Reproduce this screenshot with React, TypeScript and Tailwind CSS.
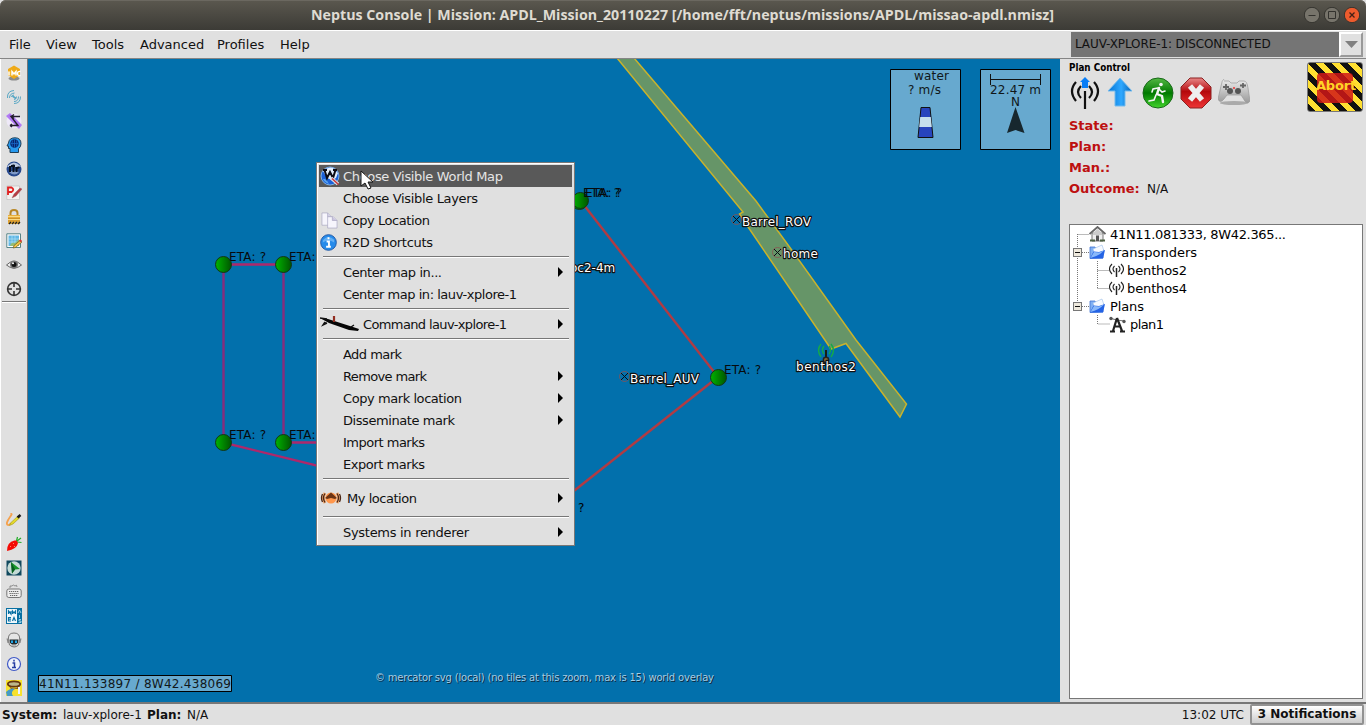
import React from "react";

type IconProps = { name: string };

function ToolIcon({ name }: IconProps) {
  const art: Record<string, React.ReactNode> = {
    imc: (
      <>
        <ellipse cx="8" cy="13.5" rx="5.5" ry="2" fill="#666" opacity=".7" />
        <path d="M8 0.5 14 4v6l-6 4-6-4V4z" fill="#efaa18" />
        <path d="M2 6h12v4.500H2z" fill="#f3b52c" />
        <path d="M3 6.500v4M6 10.500v-4l2 2.500 2-2.500v4M14.500 6.500q-3-.5-3 2t3 2" fill="none" stroke="#fff" strokeWidth="1.400" />
      </>
    ),
    signal: (
      <g fill="none" stroke="#58a7c4" strokeWidth="1">
        <path d="M1.500 9Q1 2 8 1.500M3.500 9q0-4.500 5-5M5.500 8q0-2 2.500-2M8 14.500q6.500 0 6.500-7M8 12.500q4.500 0 4.500-5M8 10.500q2.500 0 2.500-3" />
        <path d="m6.500 7 3.500 2.500" strokeWidth="1.600" />
      </g>
    ),
    swap: (
      <>
        <circle cx="8" cy="8" r="7.500" fill="#eee9f8" />
        <path d="M0 3 4 0l12 12-3 4z" fill="#b27af5" />
        <path d="M14 3.500H5l7 9H4M5 3.500l3-2M5 3.500l3 2M12 12.500l-2-2.500M4 12.500l2-1.500M4 12.500l2 1.500" fill="none" stroke="#24202e" strokeWidth="1.400" />
      </>
    ),
    head: (
      <>
        <path d="M4 15.500v-4H2.500V9H1l1.500-3Q3 .8 9 .8q6 0 6 6 0 3-2.500 5v3.700z" fill="#2699ef" stroke="#213e55" />
        <circle cx="8.500" cy="6.500" r="4.300" fill="#07246c" />
        <path d="M4.500 6.500h8M8.500 2.500v8M6.500 3.500q-1 3 0 6M10.500 3.500q1 3 0 6" fill="none" stroke="#1866c6" strokeWidth=".8" />
      </>
    ),
    ir: (
      <>
        <circle cx="8" cy="8" r="7.500" fill="#27488c" />
        <path d="M1.500 5Q8-2 14.500 5v1h-13z" fill="#bbc9e1" />
        <path d="M3 11Q8 8 13 11q-4 5-10 0" fill="#7f99c6" />
        <path d="M4 5v6M7.500 3.500V11M5 5h4M10.500 11V6M10.500 8q.5-2 3-1.500" fill="none" stroke="#07101f" strokeWidth="2" />
      </>
    ),
    pdf: (
      <>
        <path d="M.8 1h12.700v13.500H.8z" fill="#f5f1ef" stroke="#bbb" strokeWidth=".6" />
        <path d="M2 10V2.500h3.500q3.500 2 0 4.500H2" fill="none" stroke="#e02020" strokeWidth="1.800" />
        <path d="m6 13 2-4 6-6 2 1-6 7z" fill="#b83b42" stroke="#8f5d60" strokeWidth=".4" />
      </>
    ),
    lock: (
      <>
        <path d="M4.500 6.500V4q0-3 3.500-3t3.500 3v2.500" fill="none" stroke="#b78625" strokeWidth="2" />
        <path d="M2 6h12v9H2z" fill="#e8ad3b" />
        <path d="M2 7.500h12M2 10.500h12" stroke="#f9d983" />
        <path d="M2 9.500h12M2 12h12" stroke="#bd7d19" strokeWidth=".6" />
        <path d="m3 15 2-2M6 15l2-2M9 15l2-2M12 15l2-2" stroke="#222" strokeWidth="1.400" />
      </>
    ),
    map: (
      <>
        <path d="M.8 .8h13.700v13.700H.8z" fill="#fff" stroke="#578487" />
        <path d="M2.500 2.500h10.500v10.500H2.500z" fill="#62b7e5" />
        <path d="M2 6h11M2 9h11M6 2v11M9 2v11" stroke="#b9e7f5" strokeWidth=".6" />
        <path d="M4 13q1-4 5-3l4-4v7z" fill="#95bd76" />
        <path d="m7 15 1-2.500 6-5 2 1.500-6.500 5.500z" fill="#f3c745" stroke="#604a1b" strokeWidth=".6" />
        <path d="m13.500 7 2 1.500" stroke="#d33" strokeWidth="2" />
      </>
    ),
    eye: (
      <>
        <path d="M.5 8Q8 .5 15.500 8 8 14.500 .5 8" fill="#eee" stroke="#666" />
        <circle cx="8" cy="7.500" r="4" fill="#777" />
        <circle cx="8" cy="7.500" r="2.500" fill="#111" />
        <circle cx="7" cy="6.200" r="1" fill="#fff" />
      </>
    ),
    target: (
      <g fill="none" stroke="#333" strokeWidth="1.600">
        <circle cx="8" cy="8" r="6.400" />
        <path d="M8 1v5M8 10v5M1 8h5M10 8h5" />
      </g>
    ),
    pencil: (
      <>
        <path d="M4.500 2Q7 1 4 5q-5 7-2 8 1 .5 3-2" fill="none" stroke="#f5a14d" strokeWidth="1.800" />
        <path d="m3.500 13.500 1.500-3 7-6.500 2 1.500-7 6.500z" fill="#e4da2c" stroke="#a29716" strokeWidth=".6" />
        <path d="m11.500 5.500 3-2.500" stroke="#171717" strokeWidth="2.500" />
      </>
    ),
    carrot: (
      <>
        <path d="m10.500 5 1-4M11 5l4-3M11 6l4.500.5" stroke="#22ad28" strokeWidth="1.200" />
        <path d="M1 15q0-9 7.500-10.500h2L12 7q-1 6-11 8" fill="#f40b05" />
        <path d="m7 7 1 1M4 10l1 1M8 10l1 1" stroke="#ff8b64" />
      </>
    ),
    north: (
      <>
        <path d="M.500 .500h15v15h-15z" fill="#11495e" />
        <circle cx="8" cy="8" r="6.700" fill="#c4dad5" />
        <path d="m5 2 9 7-5 .500-3 4z" fill="#159427" />
        <path d="m5 2 4 7.500-3 4z" fill="#075c20" />
      </>
    ),
    keys: (
      <>
        <path d="M4 4q-1-3 2-2 1-2 3 0 2-2 2 1" fill="none" stroke="#777" strokeWidth=".8" />
        <rect x=".8" y="5" width="14.400" height="8.500" rx="2" fill="#eee" stroke="#777" />
        <path d="M3 7.500h10M3.500 9.500h9M4 11.500h8" stroke="#666" strokeDasharray="1.300 .700" strokeWidth="1" />
      </>
    ),
    nmea: (
      <>
        <path d="M0 0h16v16H0z" fill="#0870a3" />
        <path d="M1 1h10v14H1z" fill="#f0f8fc" />
        <path d="M2.500 6V3l2.500 3V3M6.500 6V3L8 5l1.500-2v3M5 9.500H2.500v3.500H5M2.500 11.200H5M6.500 13l1.500-3.500L9.500 13" fill="none" stroke="#0870a3" strokeWidth="1.200" />
        <path d="m12 5 1.500-3L15 5M13.500 7v3M15 11.500h-2v1.500h2v1.500h-2.500" fill="none" stroke="#bde4f3" strokeWidth=".8" />
      </>
    ),
    robot: (
      <>
        <path d="M2.500 8Q1.500 1 8 1t5.500 7l-1 5q-4 4-9 0z" fill="#e5e5e5" stroke="#777" />
        <path d="M.5 6.500H3V11H1.500zM13 6.500h2.500L14.500 11H13z" fill="#888" />
        <path d="M3.500 7.500h9L12 11l-2 1.500H6L4 11z" fill="#20282b" />
        <path d="M5 8.500h2v2.500H5zM9 8.500h2v2.500H9z" fill="#21a5e6" />
        <path d="M5.500 14h5" stroke="#888" />
      </>
    ),
    info: (
      <>
        <circle cx="8" cy="8" r="6.500" fill="#f0f3fa" stroke="#4059c6" strokeWidth="1.200" />
        <path d="M6.500 7h2v4.500M6 11.500h4M8 3.800v1.700" stroke="#263ea3" strokeWidth="1.500" fill="none" />
      </>
    ),
    ring: (
      <>
        <path d="M0 0h16v16H0z" fill="#f7e12e" />
        <path d="M2 5q6 7 12 0l-2 4H5z" fill="#8c5420" />
        <ellipse cx="8" cy="4" rx="6.200" ry="2.700" fill="#bdb68b" stroke="#65350e" strokeWidth="1.800" />
        <path d="M13 7v7" stroke="#eef4ff" strokeWidth="2" />
        <path d="M0 12q5-5 9-3-5 3-2 7H1" fill="#469ac4" />
      </>
    ),
  };
  return <svg className="block size-4" viewBox="0 0 16 16">{art[name]}</svg>;
}

const upperTools = ["imc", "signal", "swap", "head", "ir", "pdf", "lock", "map", "eye", "target"];
const lowerTools = ["pencil", "carrot", "north", "keys", "nmea", "robot", "info", "ring"];

function TitleBar() {
  return (
    <header className="relative flex h-[30px] shrink-0 items-center rounded-t-md bg-linear-to-b from-[#5b584f] to-[#3c3b36] pl-[311px] font-['Open_Sans','Noto_Sans',sans-serif] text-[14px] font-bold shadow-[inset_0_1px_#6b6860]">
      <svg className="block h-[30px] w-[745px]"><text x="0" y="20" fill="#dfdbd2" textLength="743" lengthAdjust="spacingAndGlyphs">Neptus Console | Mission: APDL_Mission_20110227 [/home/fft/neptus/missions/APDL/missao-apdl.nmisz]</text></svg>
      <div className="absolute top-[7px] right-[6px] flex gap-1">
        <svg className="size-4" viewBox="0 0 16 16"><circle cx="8" cy="8" r="7.700" fill="#77746b" stroke="#35342f" /><path d="M4.500 8.500h7" stroke="#33322e" /></svg>
        <svg className="size-4" viewBox="0 0 16 16"><circle cx="8" cy="8" r="7.700" fill="#77746b" stroke="#35342f" /><path d="M4.500 4.500h7v7h-7z" fill="none" stroke="#33322e" /></svg>
        <svg className="size-4" viewBox="0 0 16 16"><circle cx="8" cy="8" r="7.700" fill="#ed5b2d" stroke="#35342f" /><path d="m5.500 5.500 5 5m0-5-5 5" stroke="#442016" strokeWidth="1.300" /></svg>
      </div>
    </header>
  );
}

function MenuBar() {
  return (
    <nav className="flex h-[29px] shrink-0 border-t border-b border-t-white border-b-[#858585] text-[13px]">
      <div className="flex flex-1 items-center pl-[9px]">
        <span className="w-[37px]">File</span><span className="w-[46px]">View</span>
        <span className="w-[48px]">Tools</span><span className="w-[77px]">Advanced</span>
        <span className="w-[63px]">Profiles</span><span>Help</span>
      </div>
      <div className="mt-px mr-[3px] flex h-[25px] w-[292px] bg-[#757575]">
        <span className="flex-1 pl-[4px] text-[12px] leading-[25px] tracking-[-0.1px]">LAUV-XPLORE-1: DISCONNECTED</span>
        <div className="flex w-6 items-center justify-center border-2 border-t-white border-r-[#999] border-b-[#999] border-l-white bg-[#e0e0e0]">
          <svg width="13" height="7"><path d="M0 0h13L6.500 7z" fill="#808080" /></svg>
        </div>
      </div>
    </nav>
  );
}

function SideTools() {
  return (
    <aside className="flex w-7 shrink-0 flex-col border-r border-l border-r-[#777] border-l-white">
      <div className="flex flex-col items-center gap-2 pt-[6px]">{upperTools.map((n) => <ToolIcon key={n} name={n} />)}</div>
      <div className="mx-px mt-[4px] h-[2px] border-t border-t-[#777] bg-white" />
      <div className="mt-auto flex flex-col items-center gap-2 pb-[6px]">{lowerTools.map((n) => <ToolIcon key={n} name={n} />)}</div>
    </aside>
  );
}

const nodes = [[223, 264], [283, 264], [223, 442], [283, 442], [579, 201], [580, 200], [718, 377]];
const etas = [[229, 261], [289, 261], [229, 439], [289, 439], [583, 197], [585, 197], [724, 374]];
const marks: [string, number, number, number, number, number][] = [
  ["Barrel_ROV", 736.5, 219.5, 742, 226, 69], ["home", 777.5, 252.5, 783, 258, 35], ["Barrel_AUV", 624.5, 376.5, 630, 383, 69],
];

function Outlined({ x, y, width, children }: { x: number; y: number; width?: number; children: string }) {
  return <text x={x} y={y} textLength={width} fill="#fff" stroke="#111" strokeWidth="2.400" strokeLinejoin="round" paintOrder="stroke" fontSize="12">{children}</text>;
}

function MissionMap() {
  return (
    <svg className="absolute inset-0 block h-full w-full" viewBox="28 59 1032 643">
      <defs><linearGradient id="node"><stop stopColor="#00b400" /><stop offset="1" stopColor="#005500" /></linearGradient></defs>
      <path d="M617 58h17L756 201 791 249 856 340 906.500 404 900 417 846 343.500 831 349 744 221 739.500 214 743 212z" fill="#669568" stroke="#c8b32d" strokeWidth="1.500" />
      <g fill="none" strokeWidth="2.400">
        <path d="M223.500 264v178M283.500 264v178" stroke="#872d7d" />
        <path d="M223 264.500h60M283 442.500h70M223 442.500l130 32" stroke="#ae286b" />
        <path d="M580 200 718 377 570 494" stroke="#b13b43" />
      </g>
      {nodes.map(([x, y], i) => <circle key={i} cx={x + 0.5} cy={y + 0.5} r="8" fill="url(#node)" stroke="#12351a" />)}
      {etas.map(([x, y], i) => <text key={i} x={x} y={y} fontSize="12" textLength="37" fill="#070a0c">ETA: ?</text>)}
      <text x="578" y="512" fontSize="12">?</text>
      {marks.map(([name, cx, cy, x, y, w]) => (
        <g key={name}>
          <circle cx={cx} cy={cy} r="5" fill="none" stroke="#8b5050" strokeWidth=".8" />
          <path d={`M${cx - 3.5} ${cy - 3.5}l7 7m0-7-7 7`} stroke="#080f16" />
          <Outlined x={x} y={y} width={w}>{name}</Outlined>
        </g>
      ))}
      <Outlined x={570} y={272}>oc2-4m</Outlined>
      <g fill="none" strokeWidth="1.400" stroke="#15aa49">
        <path d="M821 344q-5 6 0 13M831 344q5 6 0 13M824 346q-3 4 0 8M829 346q3 4 0 8" />
        <path d="M826 350v8" stroke="#171d17" strokeWidth="2" /><circle cx="826" cy="360" r="2.700" fill="#806b37" stroke="#222" />
      </g>
      <Outlined x={796} y={371} width={60}>benthos2</Outlined>

      <g fill="#67a9cf" stroke="#000"><path d="M890.500 69.500h70v80h-70zM980.500 69.500h70v80h-70zM38.500 675.500h193v16h-193z" /></g>
      <g fontSize="12" fill="#101719">
        <text x="914" y="80" textLength="35">water</text><text x="908" y="94" textLength="33">? m/s</text>
        <text x="990" y="94" textLength="51">22.47 m</text><text x="1011" y="106">N</text>
        <text x="39" y="688" textLength="192">41N11.133897 / 8W42.438069</text>
      </g>
      <path d="M921 107.500h9l3 30h-15z" fill="#2744bd" stroke="#111" /><path d="M920.200 117h10.600l1 10h-12.600z" fill="#c6dfed" />
      <path d="M990.500 79.500h50M990.500 74v11M1040.500 74v11" stroke="#111" fill="none" />
      <path d="m1015.500 107 9 26-9-3-8.500 3z" fill="#17272e" />
      <text fontSize="10" fill="#a5cce4" x="375" y="681" textLength="339" className="[text-shadow:1px_1px_0_#10293d]">© mercator svg (local) (no tiles at this zoom, max is 15) world overlay</text>
    </svg>
  );
}

function MenuArt({ kind }: { kind: string }) {
  if (kind === "world") return (
    <svg className="ml-px h-5 w-[20px]" viewBox="0 0 20 20"><circle cx="10" cy="10" r="9" fill="#1c62d8" stroke="#8fc3f6" strokeWidth=".8" /><path d="M3 5q5-5 10-3l5 5-2 5-4 2-5-2z" fill="#e2eefb" /><path d="M5 13q3 2 4 5-5-2-6-5M12 4l3 2" fill="#58a4f1" /><path d="m4.500 4 2.500 8 3-6 3 6 2.500-8M3 4h4M13 4h4" fill="none" stroke="#0b0b14" strokeWidth="2" /><path d="m11 12 7 6" stroke="#dce3ed" strokeWidth="3.500" /><path d="m12 12.500 6.500 6" stroke="#c93a3a" strokeWidth="1.600" /></svg>
  );
  if (kind === "copy") return (
    <svg className="ml-[2px] size-[17px]" viewBox="0 0 18 18"><g stroke="#a7a4bf" strokeWidth=".7" fill="#f6f5fc"><path d="M1 1h6l4 4v9H1z" /><path d="M7 1v4h4" fill="#d6d2e7" /><path d="M8 5h5l4 4v8H7V5z" /><path d="M12 5v4h5" fill="#cbc6df" /></g></svg>
  );
  if (kind === "info") return (
    <svg className="ml-px size-[17px]" viewBox="0 0 18 18"><circle cx="9" cy="9" r="8.300" fill="#268bea" stroke="#225aa7" /><path d="M3 7Q8 0 15 6v3Q9 5 3 9z" fill="#73b9f6" opacity=".8" /><path d="M9 3.500v2M7 8h2.500v5M6.500 13.500h5" stroke="#fff" strokeWidth="2" fill="none" /></svg>
  );
  if (kind === "vehicle") return (
    <svg className="h-[18px] w-[41px] translate-x-px" viewBox="0 0 41 18"><path d="m0 3 8 1 25 8 6 2-1 2-9-1L9 8z" fill="#050505" /><path d="m0 3 7 1M7 8l-4 2 2-3M31 12l3-2" stroke="#111" strokeWidth="1.400" /><path d="M14 1v6" stroke="#922e21" strokeWidth="2.200" /></svg>
  );
  return (
    <svg className="ml-px h-[18px] w-[22px]" viewBox="0 0 22 18"><circle cx="11" cy="9" r="5.500" fill="#ff974c" /><path d="m5 9 6-5.500L17 9l-2 1-4-1-4 1z" fill="#6b3415" /><g fill="none" stroke="#f0a66b" strokeWidth="3"><path d="M5 4q-3 5 0 10M17 4q3 5 0 10" /></g><path d="M5 4.500q-3 4.500 0 9M2.500 5q-2 4 0 8M17 4.500q3 4.500 0 9M19.500 5q2 4 0 8" fill="none" stroke="#4b2615" strokeWidth="1.300" /></svg>
  );
}

function MenuRow({ label, icon, arrow, active, tall, wide, width }: { label: string; icon?: string; arrow?: boolean; active?: boolean; tall?: boolean; wide?: string; width: number }) {
  return (
    <div className={`${tall ? "h-[30px]" : "h-[22px]"} ${active ? "bg-[#595959] text-[#e5e5e5]" : "text-[#111]"} flex items-center pr-[9px]`}>
      <div className={`${wide ?? "w-6"} shrink-0`}>{icon && <MenuArt kind={icon} />}</div>
      <svg className="block h-[22px] w-0 min-w-0 flex-1"><text x="0" y="16" fontSize="13" textLength={width} fill="currentColor">{label}</text></svg>
      {arrow && <svg width="6" height="10"><path d="M1 0v10l5-5z" /></svg>}
    </div>
  );
}

function Divider() {
  return <div className="mr-[3px] ml-1 flex h-2 items-center"><div className="h-[2px] w-full border-t border-t-[#777] bg-white" /></div>;
}

function ContextMenu() {
  return (
    <div className="absolute top-[103px] left-[288px] h-[384px] w-[259px] border border-[#777] bg-[#e0e0e0] p-[2px] shadow-[inset_1px_1px_white]">
      <MenuRow label="Choose Visible World Map" icon="world" active width={160} />
      <MenuRow label="Choose Visible Layers" width={135} />
      <MenuRow label="Copy Location" icon="copy" width={87} />
      <MenuRow label="R2D Shortcuts" icon="info" width={90} />
      <Divider />
      <MenuRow label="Center map in..." arrow width={99} />
      <MenuRow label="Center map in: lauv-xplore-1" width={174} />
      <Divider />
      <MenuRow label="Command lauv-xplore-1" icon="vehicle" wide="w-11" arrow width={144} />
      <Divider />
      <MenuRow label="Add mark" width={59} />
      <MenuRow label="Remove mark" arrow width={84} />
      <MenuRow label="Copy mark location" arrow width={119} />
      <MenuRow label="Disseminate mark" arrow width={112} />
      <MenuRow label="Import marks" width={82} />
      <MenuRow label="Export marks" width={82} />
      <Divider />
      <MenuRow label="My location" icon="home" wide="w-7" tall arrow width={70} />
      <Divider />
      <MenuRow label="Systems in renderer" arrow width={126} />
      <svg className="absolute top-[7px] left-[43px] h-5 w-[13px]" viewBox="0 0 13 20"><path d="M1 1v15l4-3 3 6 3-1-3-6h5z" fill="#fff" stroke="#151515" /></svg>
    </div>
  );
}

function PlanControl() {
  return (
    <section className="h-[165px] shrink-0">
      <div className="flex h-[55px] justify-between">
        <div>
          <h2 className="h-[18px] pt-[2px] text-[10px] leading-[14px] font-bold tracking-[-0.700px]"><svg className="block h-[14px] w-[64px]"><text x="0" y="10" fontSize="10" textLength="61" lengthAdjust="spacingAndGlyphs" letterSpacing="0">Plan Control</text></svg></h2>
          <div className="flex gap-[6px]">
            <svg className="-mr-[3px] size-8" viewBox="0 0 32 32"><g fill="none" stroke="#111" strokeWidth="2.200"><path d="M7 5q-8 9 0 19M12 9q-6 6 0 12M25 5q8 9 0 19M20 9q6 6 0 12M16 14v18" /></g><path d="m16 0 5 5h-2v6h-6V5h-2z" fill="#087df6" /></svg>
            <svg className="size-8" viewBox="0 0 32 32"><defs><linearGradient id="up"><stop stopColor="#0574d4" /><stop offset=".55" stopColor="#2fa8ff" /><stop offset="1" stopColor="#0764b8" /></linearGradient></defs><path d="m16 1 12 13h-7v15H11V14H4z" fill="url(#up)" stroke="#75bbed" /></svg>
            <svg className="size-8" viewBox="0 0 32 32"><defs><linearGradient id="go" x2="0" y2="1"><stop stopColor="#55b945" /><stop offset=".5" stopColor="#007900" /><stop offset="1" stopColor="#43d52d" /></linearGradient></defs><circle cx="16" cy="16" r="15" fill="url(#go)" stroke="#176818" /><g fill="none" stroke="#f4f4f4" strokeLinecap="round"><circle cx="19" cy="7.500" r="1.800" fill="#f4f4f4" stroke="none" /><path d="m17 11-2 6 5 2 1 6" strokeWidth="2.400" /><path d="m16 11-5 1-1 3M17 12l3 3 3-1M14 18l-2 5-5 1" strokeWidth="1.600" /></g></svg>
            <svg className="size-8" viewBox="0 0 32 32"><defs><linearGradient id="stop" x2="0" y2="1"><stop stopColor="#e88787" /><stop offset=".45" stopColor="#b5080c" /><stop offset="1" stopColor="#ee3535" /></linearGradient></defs><path d="M10 1h12l9 9v12l-9 9H10l-9-9V10z" fill="url(#stop)" stroke="#8b2020" /><path d="m10 9 12 14M22 9 10 23" stroke="#eee" strokeWidth="5.500" /></svg>
            <svg className="size-8" viewBox="0 0 32 32"><defs><linearGradient id="pad" x2="0" y2="1"><stop stopColor="#eee" /><stop offset="1" stopColor="#999" /></linearGradient></defs><ellipse cx="16" cy="26" rx="14" ry="2" fill="#aaa" /><path d="M6 4h5l2 2h6l2-2h5q3 0 4 7l2 13q-3 5-7-3l-2-3H9l-3 4q-4 5-6 0l3-13q1-6 3-7" fill="url(#pad)" stroke="#999" strokeWidth=".7" /><path d="M5 10h6M8 7v6M22 8.500h6M25 6v5" stroke="#666" strokeWidth="1.800" /><circle cx="12" cy="14" r="3" fill="#555" /><circle cx="20" cy="14" r="3" fill="#555" /><circle cx="16" cy="11" r="1" fill="#e33" /></svg>
          </div>
        </div>
        <button className="relative mt-[3px] h-[50px] w-[56px] overflow-hidden rounded-[3px] border border-[#777] bg-[repeating-linear-gradient(45deg,#111_0_5.6px,#ffdf31_5.6px_11.2px)]">
          <span className="absolute top-[10px] left-[9px] h-[30px] w-9 rounded-sm bg-[#d01818]/85" />
          <span className="absolute top-[12px] left-[8px] text-[13px] leading-[22px] font-bold tracking-[-0.2px] text-[#ffd426]">Abort</span>
        </button>
      </div>
      <div className="mt-[1px] flex flex-col text-[13px] font-bold text-[#bd1010]">
        <span className="h-[21px] leading-[21px]">State:</span><span className="h-[21px] leading-[21px]">Plan:</span><span className="h-[21px] leading-[21px]">Man.:</span>
        <span className="flex h-[21px] leading-[21px]"><span className="w-[78px]">Outcome:</span><span className="pt-px text-[12px] font-normal text-[#111]">N/A</span></span>
      </div>
    </section>
  );
}

function TreeIcon({ kind }: { kind: string }) {
  if (kind === "home") return <svg className="h-4 w-[17px]" viewBox="0 0 17 16"><path d="M3 7h11v8H3z" fill="#eee" stroke="#777" /><path d="m4 7 4.500-4L13 7v2H4z" fill="#ccc" /><path d="m.5 8 8-7 8 7" fill="none" stroke="#666" strokeWidth="1.800" /><path d="M7 9.500h3V15H7z" fill="#555" /><path d="M1 14.500h5M11 14.500h5" stroke="#4d6043" strokeWidth="2" /></svg>;
  if (kind === "folder") return <svg className="h-4 w-[17px]" viewBox="0 0 17 16"><path d="M1 14.500V3h5l1 2h7v9z" fill="#7fb0f4" stroke="#4275d0" strokeWidth=".8" /><path d="m4 5 9-4 2 6-9 4z" fill="#f6faff" stroke="#9abce8" strokeWidth=".6" /><path d="M1 14.500 4.500 7.500 10 8l6-2-2 8.500z" fill="#2463e5" /><path d="M1.500 14 5 8l5 .500 5-2Q10 12 1.500 14" fill="#89b9fa" /></svg>;
  if (kind === "antenna") return <svg className="h-4 w-[15px]" viewBox="0 0 15 16"><g fill="none" stroke="#222" strokeWidth="1.100"><path d="M3 2q-5 5 0 10M5.500 4q-3 3 0 6M12 2q5 5 0 10M9.500 4q3 3 0 6" /><path d="M7.500 6v9" strokeWidth="1.500" /></g></svg>;
  return <svg className="size-[17px]" viewBox="0 0 17 17"><path d="m2 2.500 6 1.500 7 1" stroke="#777" strokeWidth="1.200" /><path d="M8 2 4 15M8 2l5 13M6 10.500h6M1 15.500h5M11 15.500h5" stroke="#222" strokeWidth="2.200" fill="none" /><circle cx="2" cy="2.500" r="1.700" fill="#555" /><circle cx="15" cy="5.500" r="1.700" fill="#555" /></svg>;
}

function TreeRow({ label, icon, pad, gap, width }: { label: string; icon: string; pad: string; gap: string; width: number }) {
  return <div className={`flex h-[18px] items-center ${pad} ${gap}`}><TreeIcon kind={icon} /><svg className="h-[18px] w-0 min-w-0 flex-1"><text x="0" y="13.500" fontSize="13" textLength={width}>{label}</text></svg></div>;
}

function PlanTree() {
  return (
    <section className="relative mb-[3px] flex-1 border border-[#777] bg-white">
      <svg className="absolute top-0 left-0 h-[108px] w-[42px]" viewBox="0 0 42 108"><path d="M7.500 9v72M7.500 9.500h12M12 27.500h8M27.500 36v27M27.500 45.500h12M27.500 63.500h12M12 81.500h8M27.500 90v9h12" fill="none" stroke="#777" strokeDasharray="1 1" />{[24, 78].map((y) => <g key={y}><rect x="3.500" y={y - 0.500} width="8" height="8" fill="#eee9dd" stroke="#777" /><path d={`M5 ${y + 3.500}h5`} stroke="#111" /></g>)}</svg>
      <div className="relative flex flex-col">
        <TreeRow label="41N11.081333, 8W42.365..." icon="home" pad="pl-[19px]" gap="gap-[4px]" width={176} />
        <TreeRow label="Transponders" icon="folder" pad="pl-[19px]" gap="gap-[4px]" width={87} />
        <TreeRow label="benthos2" icon="antenna" pad="pl-[39px]" gap="gap-[3px]" width={60} />
        <TreeRow label="benthos4" icon="antenna" pad="pl-[39px]" gap="gap-[3px]" width={60} />
        <TreeRow label="Plans" icon="folder" pad="pl-[19px]" gap="gap-[4px]" width={34} />
        <TreeRow label="plan1" icon="plan" pad="pl-[39px]" gap="gap-[4px]" width={34} />
      </div>
    </section>
  );
}

export default function App() {
  return (
    <div className="flex h-[727px] w-[1366px] flex-col overflow-hidden bg-[#e0e0e0] font-['DejaVu_Sans','Noto_Sans',sans-serif] text-[#111]">
      <TitleBar />
      <MenuBar />
      <main className="flex h-[643px] shrink-0">
        <SideTools />
        <div className="relative w-[1032px] shrink-0 overflow-hidden bg-[#0270ac]"><MissionMap /><ContextMenu /></div>
        <aside className="flex min-w-0 flex-1 flex-col pr-[3px] pl-[9px]"><PlanControl /><PlanTree /></aside>
      </main>
      <footer className="flex h-[23px] shrink-0 items-center border-t-2 border-t-[#777] pr-[2px] pl-[2px] text-[12px]">
        <div className="flex flex-1 pt-px whitespace-nowrap"><b className="w-[61px] tracking-[0.1px]">System:</b><span className="w-[84px]">lauv-xplore-1</span><b className="w-[40px]">Plan:</b><span>N/A</span></div>
        <span className="mr-[6px] pt-px">13:02 UTC</span>
        <button className="h-[21px] w-[114px] rounded-xs border-2 border-[#929292] bg-linear-to-b from-white to-[#ccc] text-[12px] leading-[17px] font-bold whitespace-nowrap">3 Notifications</button>
      </footer>
      <div className="h-[2px] bg-white" />
    </div>
  );
}
